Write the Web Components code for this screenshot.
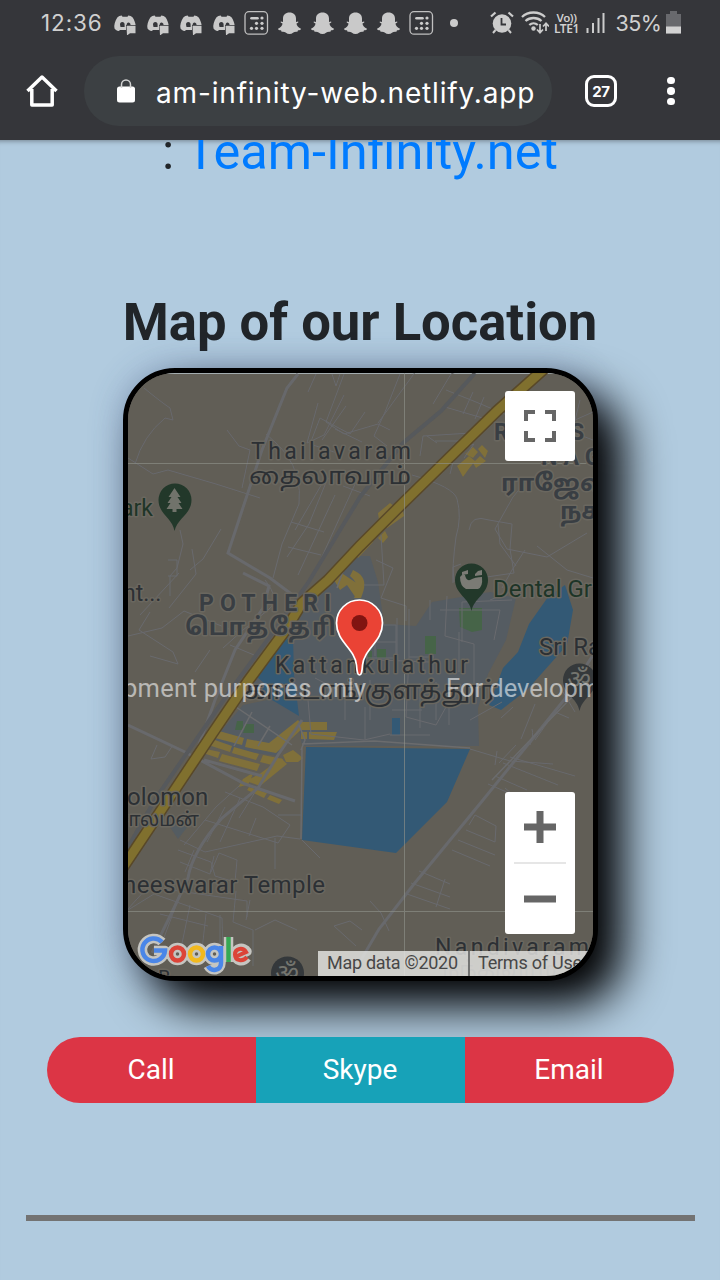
<!DOCTYPE html>
<html lang="en"><head><meta charset="utf-8"><title>Team Infinity</title>
<style>html,body{margin:0;height:100%;overflow:hidden;background:#b1cbdf}body{font-family:Roboto,sans-serif}</style></head>
<body><phone-screen></phone-screen>
<script>
const define=(name,html)=>customElements.define(name,class extends HTMLElement{
  constructor(){super();this.attachShadow({mode:'open'}).innerHTML=html;}
});

define('discord-icon',`<style>:host{display:block;width:33px;height:24px}</style>
<svg width="33" height="24" viewBox="0 0 33 24"><path fill="#c9c9c9" d="M6.500 17.500c-.8-3 .5-7.500 2.800-11 1.200-1.200 2.800-1.800 4.400-2l.8 1.300h5l.8-1.300c1.600.2 3.200.8 4.400 2 1.500 2.300 2.500 5 2.900 7.500H18v5h-6c-1 1-1.500 1-2 .9-1.500-.4-2.700-1.200-3.500-2.400z"/><path d="M12 13.500a2.300 2.600 0 0 1 4.600 0v2.600H12.500zM18.600 14c0-2.500 2-3.500 3.600-1.500l.4 1.500z" fill="#35363a"/><path d="M18.500 14.800h9v7.400H22l-3 2.300z" fill="#c9c9c9"/></svg>`);
define('calculator-icon',`<style>:host{display:block;width:33px;height:24px}</style>
<svg width="33" height="24" viewBox="0 0 33 24"><rect x="5" y=".7" width="22.500" height="22.500" rx="4" fill="none" stroke="#c0c0c0" stroke-width="1.300"/><path d="M11.500 7.200h6" stroke="#ccc" stroke-width="2.600" stroke-linecap="round"/><g fill="#ccc"><circle cx="22" cy="7" r="1.600"/><circle cx="16.500" cy="12.300" r="1.600"/><circle cx="22" cy="12.300" r="1.600"/><circle cx="11.500" cy="17.300" r="1.600"/><circle cx="16.500" cy="17.300" r="1.600"/><circle cx="22" cy="17.300" r="1.600"/></g></svg>`);
define('ghost-icon',`<style>:host{display:block;width:33px;height:24px}</style>
<svg width="33" height="24" viewBox="0 0 33 24"><path fill="#c9c9c9" d="M16.500 1.500c4 0 6.500 2.500 6.500 6v3.500l2-.5c1 .5 0 1.500-1.500 2 0 2 2 4.500 4.500 5.200 0 1.300-1.500 1.300-3 1.600l-.6 1.500c-2-.3-3 0-4 .8-2.600 2-5.200 2-7.800 0-1-.8-2-1.100-4-.8L8 19.300c-1.500-.3-3-.3-3-1.600 2.500-.7 4.500-3.200 4.500-5.200-1.500-.5-2.500-1.500-1.500-2l2 .5V7.500c0-3.500 2.500-6 6.500-6z"/></svg>`);
define('status-bar',`<style>
:host{display:flex;height:45px;align-items:center;color:#d0d0d0;background:#35363a;font-family:Inter,sans-serif}
.t{box-sizing:border-box;width:107.500px;padding-left:41px;font-size:22.500px;letter-spacing:.9px}
.p{font-size:21.500px;letter-spacing:-.5px;width:50px;padding-left:11px;white-space:nowrap}
.dot{width:33px;display:flex;justify-content:center}.dot i{width:8px;height:8px;border-radius:50%;background:#ccc}
.v{width:26px;font:500 11.500px/11px "Noto Sans",sans-serif;text-align:center;letter-spacing:-.4px;margin-left:5px}
.v b{display:block;font-weight:600}.v b+b{font-size:12px}
.sys{display:flex;align-items:center;margin-left:19px}
svg{display:block}</style>
<span class="t">12:36</span><discord-icon></discord-icon><discord-icon></discord-icon><discord-icon></discord-icon><discord-icon></discord-icon><calculator-icon></calculator-icon><ghost-icon></ghost-icon><ghost-icon></ghost-icon><ghost-icon></ghost-icon><ghost-icon></ghost-icon><calculator-icon></calculator-icon><span class="dot"><i></i></span>
<div class="sys">
<svg width="24" height="24" viewBox="0 0 24 24"><circle cx="12" cy="12.500" r="9.300" fill="#ccc"/><path d="M5.500 19l-2.500 3M18.500 19l2.500 3" stroke="#ccc" stroke-width="2" fill="none"/><path d="M11.500 7v6.500h4.500" stroke="#35363a" stroke-width="1.800" fill="none"/><path d="M1 5.500 5.500 1.500M23 5.500 18.500 1.500" stroke="#ccc" stroke-width="2.200"/></svg>
<svg width="29" height="24" viewBox="0 0 29 24" style="margin-left:6px"><path d="M2 6c6-6 17-6 23 0M5.500 10c4.500-4 11.500-4 16 0M9.300 14c2.500-2.200 6-2.200 8.500 0" fill="none" stroke="#ccc" stroke-width="2.300"/><circle cx="13.500" cy="17.500" r="2.200" fill="#ccc"/><path d="M20 13v8M17 18.500l3 3.200 3-3.200M26 20v-7M23 15.500l3-3.200 3 3.200" stroke="#ccc" stroke-width="1.700" fill="none"/></svg>
<span class="v"><b>Vo))</b><b>LTE1</b></span>
<svg width="19" height="22" viewBox="0 0 19 22" style="margin-left:6px"><path d="M1.500 21v-5M7 21V11M12.500 21V6M17.500 21V1" stroke="#ccc" stroke-width="2"/></svg>
</div><span class="p">35%</span>
<svg width="15" height="23" viewBox="0 0 15 23"><path d="M4 0h7v3h4v19.500H0V3h4z" fill="#68696d"/><path d="M0 15.500h15v7H0z" fill="#d2d2d2"/></svg>`);
define('address-bar',`<style>
:host{display:flex;align-items:center;box-sizing:border-box;height:95px;padding:0 0 3px 25px;background:#35363a;color:#fff;font-family:Inter,sans-serif}
svg{display:block}.pill{display:flex;align-items:center;box-sizing:border-box;width:468px;height:70px;margin-left:25px;padding-left:32px;border-radius:35px;background:#3c4043}
.url{margin-left:20px;font-size:28px;line-height:36px;white-space:nowrap;letter-spacing:.84px;padding-top:4px}
.tabs{display:flex;align-items:center;justify-content:center;box-sizing:border-box;width:32px;height:32px;margin-left:33px;border:3.500px solid #fff;border-radius:9px;font-size:15px;font-weight:700;letter-spacing:-.3px}
.more{display:grid;gap:3px;margin-left:50px}.more i{width:7.500px;height:7.500px;border-radius:50%;background:#fff}</style>
<svg width="34" height="34" viewBox="0 0 34 34"><path d="M2.500 17 17 3l14.500 14M6.800 15v16h20.400V15" fill="none" stroke="#fff" stroke-width="3.500" stroke-linejoin="round"/></svg>
<div class="pill"><svg width="20" height="25" viewBox="0 0 20 25"><rect x="1" y="7.500" width="18" height="16" rx="2.500" fill="#fff"/><path d="M5.500 9V5.500a4.500 4.500 0 0 1 9 0V9" fill="none" stroke="#d5d5d5" stroke-width="1.500"/></svg><span class="url">am-infinity-web.netlify.app</span></div>
<div class="tabs">27</div><div class="more"><i></i><i></i><i></i></div>`);

define('location-map',`<style>
:host{display:block;position:relative;box-sizing:border-box;width:475px;height:613px;border:5px solid #000;border-radius:52px;background:#000;box-shadow:25px 25px 46px 0 #000,0 0 34px rgba(60,80,140,.3)}
.clip{width:465px;height:603px;overflow:hidden;border-radius:47px;background:#615e56}
svg{display:block}
.ctl{position:absolute;right:18px;width:70px;border-radius:3px;background:#fff}
.full{top:18px;height:70px;display:grid;place-items:center}
.zoom{bottom:42px;height:142px;display:grid;grid-template-rows:70px 2px 70px;place-items:center}
.zoom i{width:52px;height:2px;background:#e6e6e6}
text{font-family:Roboto,"Noto Sans Tamil","Noto Sans",sans-serif;paint-order:stroke;stroke:#6a675f;stroke-width:3px;stroke-linejoin:round;fill:#2c3034}
.area{fill:#393e43}.green{fill:#1e3527}.wm text{stroke:none;fill:#fff;fill-opacity:.56}.legal text{stroke:none;fill:#474747}
</style><div class="clip"><svg width="465" height="603" viewBox="128 373 465 603">
<rect x="128" y="373" width="465" height="603" fill="#615e56"/><path d="M128 373.500h465" stroke="#a4adb0"/>
<path fill="#555c62" d="M335 574l17-18 18 0 8 26 6 42 32 2 16-24 58-10 26 6-10 42-18 34-10 34 1 38H302l-4-24-48-36 30-50 40-42zM212 742l31-37 48-10 9 24-22 37-66-9zM170 827l14-15 7 10-13 17z"/>
<g fill="#335975"><path d="M285 640 293 637 294 675 299 716 262 694 264 683 257 677zM306 747 470 749 447 802 396 853 302 840zM548 597l17-12 8 25-6 35-40 45-26 20-12-5 14-37 15-16 11-28zM392 718h8v17h-8z"/></g>
<g fill="#466448"><path d="M459 608h23v22l-10 2-12-5zM425 636h11v18h-11zM377 649h9v9h-9zM368 651h4v8h-4zM237 721h6v9h-8zM246 724h8v9h-11z"/></g>
<g fill="#80703a"><path d="M334 580l9-6 12 8 8 8-7 8-9-13-7 5zM353 570c14 6 13 16 8 28h-7c5-10 4-15-4-22zM378 513l12-10 4 3-15 14zM386 521l17-10 1 5-17 12zM378 538l7-7 3 6-5 6zM373 542l-15 16-2-3 15-15zM457 466l12-10 6 5-7 9-5 7zM465 454l8-7 5 5-5 6zM478 449l4-4 6 6-3 7zM473 463l7-7 6 5-10 7z"/>
<path d="M219 731l25 7-2 7-27-7zM247 739l22 4 29-23 6 7-28 26-31-6zM212 739l20 7-2 6-22-7zM234 747l25 7-3 6-24-7zM263 755l20 4-3 8-20-5zM206 749l14 3-2 6-12-4zM222 754l38 10-3 7-38-10zM301 722h26v8h-27zM309 732h28l-3 8-25-1zM301 732h6v7h-6zM283 755l10-5 10 8-5 4-12 0zM261 773l20-15 6 6-27 22-14-5zM238 787l5-8 11-7-6 13zM249 787l18 6-3 5-17-8zM270 795l12 5-3 4-12-5z"/></g>
<g fill="none" stroke="#696a6e" stroke-width="1">
<path d="M144 388q17 14 26 20l3 12-8-2q-22 18-30 46M128 458l25 16 15-4 48 14 44 14M227 430l12 16 11 4-8 38M266 434q14 12 20 20 16 22 13 50l-17 40-9 34M344 374l-18 48 18 12 34-10 12 6M318 403l-11 40 17-8 20-40M320 418l30 16 15-22M320 418l-10 26 30 10M322 440l24-34M335 429l27 13M291 522l33 10M295 530l28-48 12-8M288 547l33 8M287 557l22-33 18-44M298 575l37-80M315 572l40-88M343 486l27 10M180 530l3 14-6 24-7 8v20M168 560h9v16h-9M332 374l4 12 4-12M316 374l-8 18M400 374l-15 38-11 24 13 10M378 423l38-52M433 404l18-30 15-6M446 390l30 12 38 16M445 407l48 14M473 392l-10 22M484 397l-9 22M420 456l3-20 48-3v8h-36M427 436l10 7M412 475q42 12 45 24 5 18-1 38-4 30-3 46M450 474q4-26 24-30l-10 14M480 578l34-5-4-24 2-25-23-4q-18-6-20 10M454 582l-1-15 8-3M523 485l-10 12-18 32 12 20 40 8 40-24M525 550l-13 20-10 18M537 546l30 24 26 8M498 524l2 20 16 22M580 400l-8 32 21 8M575 420l18-8"/>
<path d="M140 615l39-42M128 636l34-8 22-17 55 22M150 612l-11 18 34 22 5 12-28-8M169 608l27-34-4-25M190 570l13-11 18-30M265 580q16 20 3 30l-25 20-20 18M210 650l-15 22M230 645l24 10M157 745l-6 14 14-2 8-12M182 772l-8 22"/>
<path d="M381 535l3 50M376 560l17 8-12 30 25 8v15M384 585h-20M360 625h36v33h-36M397 618v38M375 632v24M360 642h36M380 660l49 2M409 609v48h25M430 600v20M447 596l-2 40 29 8M459 632v40M474 644v40h12M409 657l-3 60 30 8 10-18M420 683v45M370 680v40M345 690v30M392 710h30M315 678l27 14M308 700l3 34 53 6 26-6M365 707v32M390 735h40M436 682v38M449 685v40M490 600l20-8M512 600l-50 2 0 40M440 610h60l-6 30"/>
<path d="M240 785l-24 22-32 38M205 820l73 23 12-18-27-18-38-15M225 807l-18 35M240 798l-20 44M256 818l-7 18M260 784l-21 34M278 815h23M180 840l25 12 72-16 23 3M178 850l33 12 4 14 20 6 2-22-18-7-8 19M194 850l-9 22M180 862l30 12 4-18M275 838v31M128 910l26-16 68 24 1 39M147 888l-20 22M165 889l82 12v16M236 891l-3 31 20 8v36M250 900l-4 20M160 914l48 12M175 908l-13 35M190 905l-10 48M206 914l-5 45M220 915v40M255 930l20-10 22 10M302 840l18 18"/>
<path d="M497 751l-2 14M470 749l40 12 43 3M516 745l-17 18M510 757l65 19M503 763l55 22M495 776l32 14M488 784l37 16M535 740l20-28 14 6M575 712l-12-20M530 745q4-10 2-16M470 720l32-18M452 850l38 16M458 840l37 15M466 830l29 12 1-16-21-11-6 10M404 893l46 16M411 883l39 14M419 871l31 13M436 907l9-28M370 901l11 12 8 18M362 930l-12-9-16 5 22 20M505 788l13 11M535 704l-14 35M501 718l12-11M590 665l-10 30"/>
</g>
<g fill="none" stroke="#68696c" stroke-width="3"><path d="M298 374l-11 14-25 62-34 103 42 25 24 18M243 573l26 13-6 22-28 42-20 50-25 70M128 725l57 27 60 32 50 17M204 760l58 16M302 720l-24 35-20 33-36 30q-30 34-34 60l-14 30-22 45M593 655l-29 45-81 100-69 84-35 45-28 48"/></g>
<path d="M593 680l-24 20-35 36-42 44M347 560l-10 28M302 748l-1 91M299 725l6 15-4 10M302 744l72-3 96 7M236 707l56 38M252 712l-18 34M270 726l-12 20" stroke="#6b6c6e" fill="none" stroke-width="1.500"/>
<path d="M475 373l-34 38-38 32-43 54-52 86-37 52-44 60-29 42-42 61-34 60" fill="none" stroke="#57595c" stroke-width="4"/>
<path d="M544 369l-47 42-50 49-44 43-43 43-32 34-26 23-17 28-37 50-36 53-30 45-60 90" fill="none" stroke="#594929" stroke-width="12"/><path d="M544 369l-47 42-50 49-44 43-43 43-32 34-26 23-17 28-37 50-36 53-30 45-60 90" fill="none" stroke="#80702f" stroke-width="9"/>
<path d="M128 463.500h465M128 911.500h465M404.500 373v603" stroke="#8e9189" stroke-width="1" opacity=".65"/>
<g font-size="23"><text x="251" y="459" textLength="160">Thailavaram</text><text x="249" y="484" textLength="162" lengthAdjust="spacingAndGlyphs" font-size="23">தைலாவரம்</text>
<text x="275" y="673" textLength="193">Kattankulathur</text><text x="244" y="699" textLength="253" lengthAdjust="spacingAndGlyphs" font-size="25">காட்டாங்குளத்தூர்</text>
<g font-weight="700"><text class="area" x="199" y="611" textLength="132">POTHERI</text><text class="area" x="185" y="635" textLength="151" font-size="24">பொத்தேரி</text><text class="area" x="494" y="440" letter-spacing="5">RAJES</text><text class="area" x="541" y="465" letter-spacing="6">NAG</text><text class="area" x="501" y="491" font-size="24">ராஜேஸ்</text><text class="area" x="560" y="519" font-size="24">நகர்</text></g>
<text class="green" x="121" y="516">ark</text><text class="green" x="493" y="597" font-size="24">Dental Gr</text><text x="539" y="655" font-size="24">Sri Ra</text><text x="123" y="601">nt...</text><text x="127" y="805" font-size="24">olomon</text><text x="199" y="826" text-anchor="end" font-size="19">சாலமன்</text><text x="123" y="893" textLength="202" font-size="24">heeswarar Temple</text><text x="435" y="955" textLength="154">Nandivaram</text><text x="442" y="977" font-size="22" opacity=".5">நந்திவரம்</text><text x="158" y="985" font-size="20">B</text></g>
<path d="M174.500 531c-2-13-16-17-16-31a16.500 16.500 0 0 1 33 0c0 14-14 18-17 31z" fill="#22382a"/><path d="M174.500 488l6 9h-3l4 6h-3l4 6h-6v3h-4v-3h-6l4-6h-3l4-6h-3z" fill="#71736b"/>
<path d="M471.500 611c-2-13-16.500-17-16.500-31a16.500 16.500 0 0 1 33 0c0 14-14 18-16.500 31z" fill="#22382a"/><path d="M460 577q2-3 5-2 1 6 5 5 5-3 12-3 1 10-4 12h-12q-6-3-6-12zM462 572l6-2v4l-6 1zM475 574l3-3 4-1v5l-7 1z" fill="#7b7b75"/>
<path d="M579.500 711c-2-13-16.500-17-16.500-31a16.500 16.500 0 0 1 33 0c0 14-14 18-16.500 31z" fill="#35393b"/><text x="579" y="688" text-anchor="middle" font-size="26" style="fill:#74756f;stroke:none">ॐ</text>
<circle cx="287.500" cy="973" r="16.500" fill="#34383b"/><text x="287" y="982" text-anchor="middle" font-size="26" style="fill:#74756f;stroke:none">ॐ</text>
<g class="wm" font-size="25.500"><text x="123" y="697" textLength="243">pment purposes only</text><text x="446" y="697">For developm</text></g>
<path d="M359.500 675c-2 0-2.500-3-3-10-2-17-20-23-20-42a23 23 0 0 1 46 0c0 19-18 25-20 42-.5 7-1 10-3 10z" fill="#ea4335" stroke="#fff" stroke-width="1.700"/><circle cx="359.500" cy="623" r="8" fill="#811411"/>
<g fill="none"><path stroke="#c5c5c1" stroke-width="9.500" stroke-linejoin="round" d="M162 942a11.300 11.300 0 1 0 3 8.500h-11M184 954a6.500 6.500 0 1 1-13 0 6.500 6.500 0 1 1 13 0M203 954a6.500 6.500 0 1 1-13 0 6.500 6.500 0 1 1 13 0M221 946v17c0 8-10 9-13 3M221 954a6.500 6.500 0 1 1-13 0 6.500 6.500 0 1 1 13 0M228.500 937v25M235 957l12-5.500c-3-5-12-4-12 3 0 7 8 8 12 3"/>
<g stroke-width="4.500"><path stroke="#4a86e8" d="M162 942a11.300 11.300 0 1 0 3 8.500h-11"/><circle cx="177.500" cy="954" r="6.500" stroke="#dc4438"/><circle cx="196.500" cy="954" r="6.500" stroke="#f2b91e"/><path stroke="#4a86e8" d="M221 946v17c0 8-10 9-13 3M221 954a6.500 6.500 0 1 1-13 0 6.500 6.500 0 1 1 13 0"/><path stroke="#35a853" d="M228.500 937v25"/><path stroke="#dc4438" stroke-width="4" d="M235 957l11-5c-3-5-11-4-11 2.500 0 6.500 8 7.500 12 2.500"/></g></g>
<path d="M318 951h275v25H318z" fill="#e6e6e4" fill-opacity=".82"/><path d="M469 951v25" stroke="#555" stroke-width="1.500"/><g class="legal" font-size="18"><text x="327" y="969" textLength="131">Map data ©2020</text><text x="478" y="969" textLength="104">Terms of Use</text></g>
</svg></div>
<div class="ctl full"><svg width="32" height="32" viewBox="0 0 32 32"><path d="M2 11V2h9M21 2h9v9M30 21v9h-9M11 30H2v-9" fill="none" stroke="#666" stroke-width="4"/></svg></div>
<div class="ctl zoom"><svg width="32" height="32"><path d="M0 16h32M16 0v32" stroke="#666" stroke-width="7"/></svg><i></i><svg width="32" height="32"><path d="M0 16h32" stroke="#666" stroke-width="7"/></svg></div>`);
define('contact-button',`<style>:host{display:flex;flex:1 1 0;box-sizing:border-box;align-items:center;justify-content:center;height:66px;padding-bottom:2px;background:var(--tone,#dc3545);color:#fff;font-size:28px}</style><slot></slot>`);
define('contact-bar',`<style>:host{display:flex;width:627px;height:66px;border-radius:33px;overflow:hidden;position:relative}</style><slot></slot>`);
define('contact-page',`<style>
:host{display:flex;flex-direction:column;align-items:center;height:1140px;overflow:hidden;background:#b1cbdf;color:#212529;box-shadow:inset 0 6px 5px -5px #72808d}
.site{margin-top:-20px;height:64px;font-size:50.500px;line-height:64px;white-space:pre;color:#212529}a{color:#007bff}
h2{margin:106px 0 0;height:64px;font-size:52.600px;line-height:64px;font-weight:700;white-space:nowrap}
location-map{margin-top:14px}contact-bar{margin-top:56px}.rule{width:669px;height:6px;margin-top:112px;background:#737373}</style>
<div class="site">: <a>Team-Infinity.net</a></div><h2>Map of our Location</h2><location-map></location-map>
<contact-bar><contact-button>Call</contact-button><contact-button style="--tone:#17a2b8">Skype</contact-button><contact-button>Email</contact-button></contact-bar><div class="rule"></div>`);
define('phone-screen',`<style>:host{display:block;width:720px;height:1280px;overflow:hidden}</style><status-bar></status-bar><address-bar></address-bar><contact-page></contact-page>`);
</script></body></html>
